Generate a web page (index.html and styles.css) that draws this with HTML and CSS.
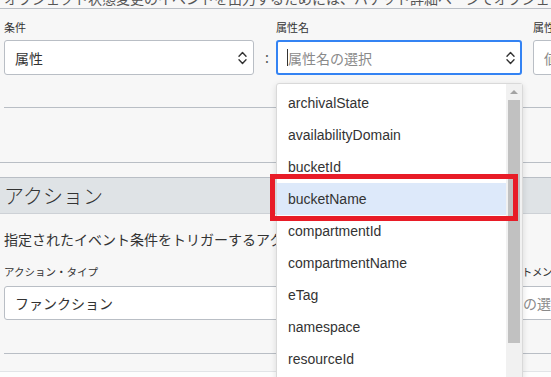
FILE: index.html
```html
<!DOCTYPE html>
<html lang="ja">
<head>
<meta charset="utf-8">
<title>条件とアクション</title>
<link rel="stylesheet" href="styles.css">
</head>
<body>
<div class="intro">オブジェクト状態変更のイベントを出力するためには、バケット詳細ページでオブジェクト・イベントの出力を有効にしてください。</div>

<div class="cond">
  <div class="field f1">
    <div class="label">条件</div>
    <div class="box"><span>属性</span>
      <svg class="chev" viewBox="0 0 9 14" width="9" height="14"><path d="M1 5.2 L4.5 1.6 L8 5.2 M1 8.8 L4.5 12.4 L8 8.8"/></svg>
    </div>
  </div>
  <div class="colon">:</div>
  <div class="field f2">
    <div class="label">属性名</div>
    <div class="box focus"><span class="ph"><span class="caret"></span>属性名の選択</span>
      <svg class="chev" viewBox="0 0 9 14" width="9" height="14"><path d="M1 5.2 L4.5 1.6 L8 5.2 M1 8.8 L4.5 12.4 L8 8.8"/></svg>
    </div>
  </div>
  <div class="field f3">
    <div class="label">属性値</div>
    <div class="box"><span class="ph">値の入力</span></div>
  </div>
</div>

<div class="rule inset r1"></div>
<div class="rule r2"></div>

<div class="section-head">アクション</div>
<div class="desc">指定されたイベント条件をトリガーするアクションを定義します。</div>

<div class="act">
  <div class="field a1">
    <div class="label">アクション・タイプ</div>
    <div class="box small"><span>ファンクション</span></div>
  </div>
  <div class="field a2">
    <div class="label tight">ファンクション・コンパートメント</div>
    <div class="box small"><span class="ph">コンパートメントの選択</span></div>
  </div>
</div>

<div class="rule inset r3"></div>
<div class="footer"></div>

<div class="dropdown">
  <ul class="list">
    <li>archivalState</li>
    <li>availabilityDomain</li>
    <li>bucketId</li>
    <li class="hl">bucketName</li>
    <li>compartmentId</li>
    <li>compartmentName</li>
    <li>eTag</li>
    <li>namespace</li>
    <li>resourceId</li>
  </ul>
  <div class="sb"><div class="arrow"></div><div class="thumb"></div></div>
</div>
<div class="mark"></div>
</body>
</html>
```
FILE: styles.css
```css
* { box-sizing: border-box; }
html, body { margin: 0; padding: 0; }
body {
  width: 551px;
  height: 377px;
  overflow: hidden;
  position: relative;
  background: #f7f7f7;
  color: #333;
  font-family: "Noto Sans CJK JP", "Liberation Sans", sans-serif;
}
.intro {
  margin-top: -11px;
  height: 20px;
  line-height: 19px;
  font-size: 14px;
  color: #555;
  padding-left: 4px;
  border-bottom: 1px solid #b9bec5;
  white-space: nowrap;
  overflow: hidden;
}
.cond {
  display: flex;
  padding: 10px 0 0 4px;
  white-space: nowrap;
}
.label {
  font-size: 11px;
  line-height: 16px;
  height: 16px;
  margin-bottom: 5px;
  color: #333;
  white-space: nowrap;
}
.box {
  height: 35px;
  border: 1px solid #b9bec5;
  border-radius: 3px;
  background: #fff;
  display: flex;
  align-items: center;
  justify-content: space-between;
  padding: 0 6px 0 10px;
  font-size: 14px;
  white-space: nowrap;
  overflow: hidden;
}
.box.focus {
  border: 2px solid #3483f3;
  padding: 0 5px 0 9px;
}
.box.small { height: 34px; }
.ph { color: #8a8a8a; display: flex; align-items: center; }
.caret {
  display: inline-block;
  width: 1px;
  height: 17px;
  background: #333;
}
.chev { flex: none; }
.chev path { fill: none; stroke: #333; stroke-width: 1.4; stroke-linecap: round; stroke-linejoin: round; }
.f1 { width: 250px; flex: none; }
.colon {
  width: 22px;
  flex: none;
  padding: 21px 0 0 11px;
  height: 56px;
  line-height: 35px;
  font-size: 14px;
  color: #555;
}
.f2 { width: 246px; flex: none; margin-right: 11px; }
.f3 { width: 200px; flex: none; }
.rule { border-top: 1px solid #b9bec5; }
.rule.inset { margin-left: 4px; }
.r1 { margin-top: 32px; }
.r2 { margin-top: 54px; }
.section-head {
  margin-top: 14px;
  height: 37px;
  background: #dfe3e6;
  border-top: 1px solid #b9bec5;
  border-bottom: 1px solid #cdd1d6;
  font-size: 20px;
  line-height: 35px;
  padding-left: 4px;
  color: #333;
  font-weight: 300;
}
.desc {
  margin-top: 15px;
  font-size: 14px;
  line-height: 20px;
  padding-left: 4px;
  white-space: nowrap;
  color: #333;
}
.act {
  display: flex;
  padding: 15px 0 0 4px;
  white-space: nowrap;
}
.act .label { font-size: 10.5px; margin-bottom: 6px; }
.act .label.tight { letter-spacing: -0.35px; }
.a1 { width: 380px; flex: none; margin-right: 16px; }
.a2 { width: 300px; flex: none; }
.r3 { margin-top: 33px; }
.footer {
  margin-top: 17px;
  border-top: 1px solid #e2e4e7;
  height: 20px;
  background: #fdfdfd;
}
.dropdown {
  position: absolute;
  left: 276px;
  top: 83px;
  width: 247px;
  height: 310px;
  background: #fff;
  border: 1px solid #d9d9d9;
  border-radius: 3px;
  box-shadow: 0 2px 6px rgba(0, 0, 0, 0.12);
  display: flex;
}
.list {
  list-style: none;
  margin: 0;
  padding: 3px 0 0 0;
  flex: 1;
}
.list li {
  height: 32px;
  line-height: 32px;
  padding-left: 11px;
  font-family: "Liberation Sans", Arial, sans-serif;
  font-size: 14px;
  color: #333;
}
.list li.hl { background: #dde9fa; }
.sb {
  width: 16px;
  flex: none;
  background: #f1f1f1;
  display: flex;
  flex-direction: column;
  align-items: center;
}
.arrow {
  margin-top: 6px;
  width: 0;
  height: 0;
  border-left: 4px solid transparent;
  border-right: 4px solid transparent;
  border-bottom: 4px solid #a3a3a3;
}
.thumb {
  margin-top: 6px;
  width: 12px;
  height: 243px;
  background: #c1c1c1;
}
.mark {
  position: absolute;
  left: 270px;
  top: 174px;
  width: 248px;
  height: 47px;
  border: 5px solid #e81c27;
}
```
